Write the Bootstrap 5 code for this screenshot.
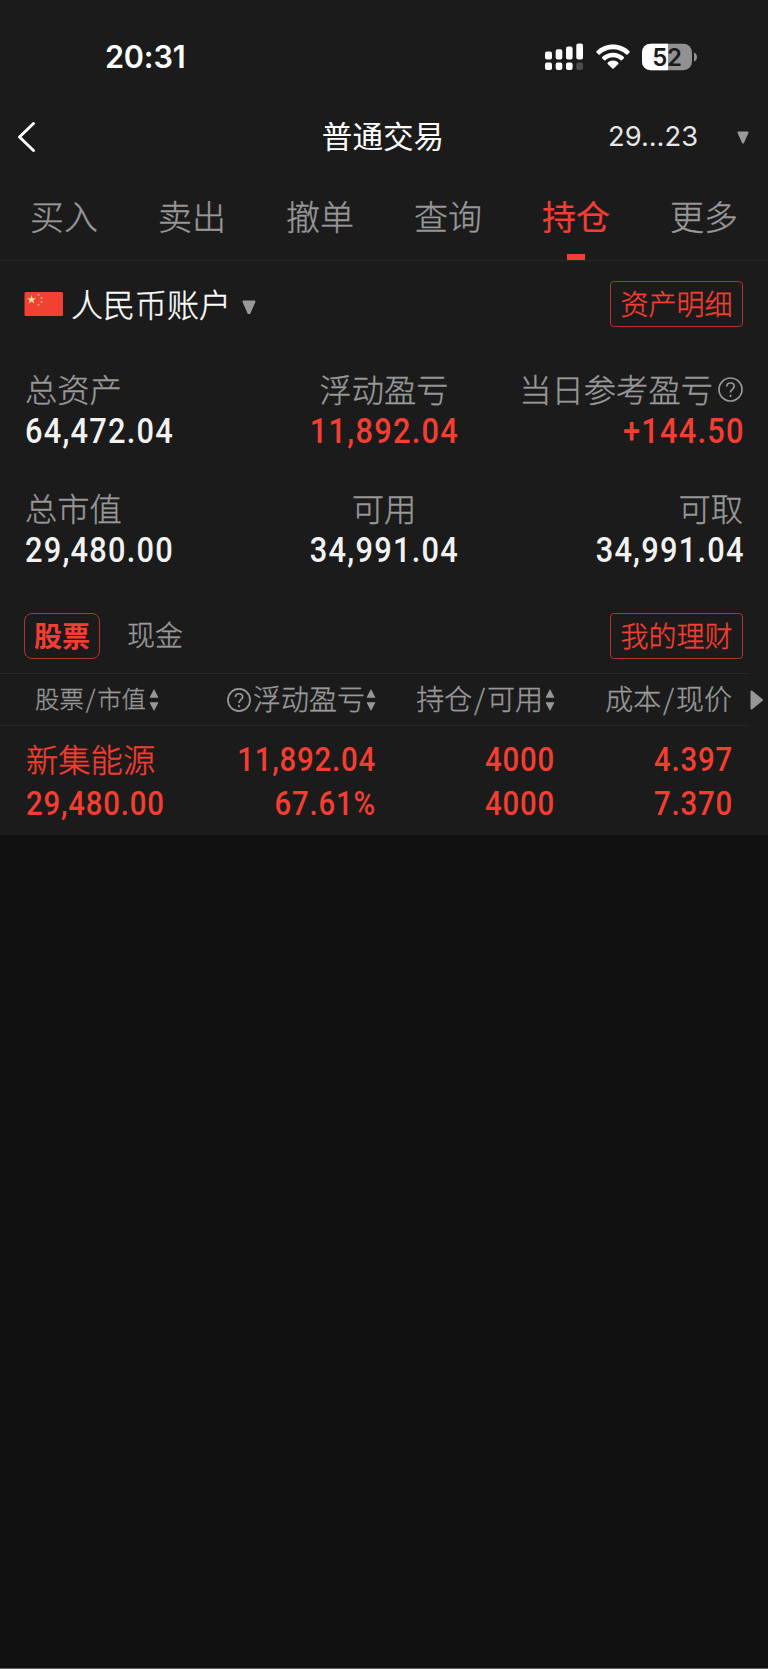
<!DOCTYPE html>
<html lang="zh-CN">
<head>
<meta charset="utf-8">
<meta name="viewport" content="width=device-width, initial-scale=1">
<title>普通交易</title>
<link href="https://cdn.jsdelivr.net/npm/bootstrap@5.3.0/dist/css/bootstrap.min.css" rel="stylesheet">
<style>
:root{--red:#f43e31;--grey:#989898;--panel:#1b1b1b}
body{background:#111;color:#fff;font-family:"Noto Sans CJK SC",sans-serif;font-weight:300;min-height:1669px;border-bottom:1px solid #666;-webkit-text-stroke:.35px}
.panel{background:var(--panel);height:835px}
.hot{color:var(--red)}
.statusbar{height:108px;padding:6px 71px 0 105px;-webkit-text-stroke:0}
.clock{font:600 30.600px/40px Inter,sans-serif;letter-spacing:-.2px}
.topbar{height:58px;padding:0 19px 0 17px;-webkit-text-stroke:0}
.page-title{font-size:30.6px;line-height:40px;font-weight:400;padding-bottom:4px}
.acct-no{font:400 27.3px/40px Inter,sans-serif;color:#e6e6e6}
.tabs-line{height:95px;border-bottom:1px solid #282828}
.tab-item{padding-top:33px;font-size:34px;line-height:34px;color:var(--grey);text-align:center}
.tab-item.on{color:var(--red);font-weight:400;-webkit-text-stroke:.2px}
.tab-item .bar{width:18px;height:6px;margin:21px auto 0;background:var(--red)}
.account{height:86px;padding:0 25px 0 24px}
.account-name{font-size:32px;line-height:40px;margin-left:8px;padding-bottom:3px}
.box{border:1px solid #b5332a;border-radius:4px;height:46px;width:133px;font-size:28px;line-height:42px;text-align:center;color:var(--red)}
.box-sm{width:76px;border-radius:8px;font-weight:700;-webkit-text-stroke:0}
.summary{padding:22px 25px 0;height:251.5px}
.summary .cellbox{height:118.5px;line-height:41px}
.cap{font-size:32.3px;line-height:38px;color:var(--grey);height:42px;white-space:nowrap}
.num{display:block;font-family:Roboto,sans-serif;font-weight:500;font-size:35px;letter-spacing:1.4px;margin-right:-1.400px;transform:scaleX(.88);color:#f2f2f2;-webkit-text-stroke:0}
.num.hot{color:var(--red)}
.num.o-start{transform-origin:left}.num.o-end{transform-origin:right}
.segment{height:74px;padding:0 25px 0 24px}
.cash{font-size:28px;line-height:42px;color:var(--grey);margin-left:27px;padding-bottom:3px}
.holdings{display:grid;grid-template-columns:200px 176px 179px 177px 1fr}
.rule{height:1px;width:750px;background:#262626}
.heads{height:51px;color:var(--grey);font-size:28px;line-height:48px}
.lbl{padding-bottom:4px}
.slash{margin:0 1.9px}
.stockrow{padding-top:12px;line-height:44px}
.stockrow .num{font-size:33.6px;letter-spacing:.9px;margin-right:-.900px;transform:scaleX(.875)}
.stockname{font-size:32.3px;line-height:41px;height:44px}
</style>
</head>
<body>
<main class="panel">
  <div class="statusbar d-flex align-items-center justify-content-between">
    <div class="clock">20:31</div>
    <div class="d-flex align-items-center">
      <svg width="39" height="28" viewBox="0 0 39 28" fill="#fff"><rect x="0" y="8.500" width="7" height="8" rx="2"/><rect x="10.700" y="6.300" width="6.600" height="10.200" rx="2"/><rect x="21" y="3.500" width="6.600" height="13" rx="2"/><rect x="31.300" y=".5" width="6.700" height="16" rx="2"/><rect x="0" y="19.500" width="7" height="7.500" rx="2"/><rect x="10.700" y="19.500" width="6.600" height="7.500" rx="2"/><rect x="21" y="19.500" width="6.600" height="7.500" rx="2"/><rect x="31.300" y="19.500" width="6.700" height="7.500" rx="2" fill="#4c4c4c"/></svg>
      <svg width="34" height="26" viewBox="0 0 34 26" style="margin:0 12px" fill="#fff"><path d="M17 0.600C23.400 .6 29.300 3.100 33.500 7.200Q34 7.900 33.500 8.500L31.500 10.500Q30.900 11 30.200 10.500C26.700 7.200 22.100 5.200 17 5.200S7.300 7.200 3.800 10.500Q3.100 11 2.500 10.500L.5 8.500Q0 7.900.5 7.200C4.700 3.100 10.600.6 17 .6Z"/><path d="M17 8.700C21.300 8.700 25 10.400 27.900 13Q28.400 13.600 27.900 14.200L25.800 16.300Q25.200 16.800 24.600 16.300C22.600 14.500 20 13.300 17 13.300S11.400 14.500 9.400 16.300Q8.800 16.800 8.200 16.300L6.100 14.200Q5.600 13.600 6.100 13C9 10.400 12.700 8.700 17 8.700Z"/><path d="M17 16.600C19.100 16.600 21 17.500 22.300 18.700Q22.800 19.300 22.300 19.900L17.600 24.500Q17 25 16.400 24.500L11.700 19.900Q11.200 19.300 11.700 18.700C13 17.500 14.900 16.600 17 16.600Z"/></svg>
      <svg width="55" height="28" viewBox="0 0 55 28"><defs><clipPath id="cell"><rect x="0" y=".7" width="50" height="26.600" rx="8.500"/></clipPath></defs><g clip-path="url(#cell)"><path fill="#919191" d="M0 0h50v28H0z"/><path fill="#fff" d="M0 0h26v28H0z"/></g><path d="M52 9.500Q55 11 55 14T52 18.500Z" fill="#919191"/><text x="25" y="22.600" text-anchor="middle" font-family="Inter,sans-serif" font-size="24" font-weight="600" letter-spacing="-.3" fill="#1b1b1b">52</text></svg>
    </div>
  </div>

  <div class="topbar row g-0 align-items-center">
    <div class="col-4"><svg class="d-block" width="20" height="32" viewBox="0 0 20 32" fill="none" stroke="#fff" stroke-width="2.900" stroke-linecap="round" stroke-linejoin="round"><path d="M16.500 2.500 2.500 16l14 13.500"/></svg></div>
    <div class="col-4 text-center page-title">普通交易</div>
    <div class="col-4 d-flex align-items-center justify-content-end"><span class="acct-no">29...23</span><svg style="margin-left:39px" width="12" height="13" viewBox="0 0 12 13"><path d="M1.500 1.500h9L6 11.500Z" fill="#999" stroke="#999" stroke-width="2" stroke-linejoin="round"/></svg></div>
  </div>

  <nav class="tabs-line row g-0">
    <div class="col tab-item">买入</div>
    <div class="col tab-item">卖出</div>
    <div class="col tab-item">撤单</div>
    <div class="col tab-item">查询</div>
    <div class="col tab-item on">持仓<div class="bar"></div></div>
    <div class="col tab-item">更多</div>
  </nav>

  <div class="account d-flex align-items-center">
    <svg width="39" height="24" viewBox="0 0 39 24"><rect x=".5" width="38.500" height="24" rx="1.500" fill="#f04132"/><path d="m7.500 3 1.100 3.200H12L9.300 8.200l1 3.300-2.800-2-2.800 2 1-3.300L3 6.200h3.400Z" fill="#fbdc9a"/><g fill="#f9b27c"><circle cx="14.500" cy="2.800" r="1"/><circle cx="17.500" cy="6" r="1"/><circle cx="17.500" cy="10" r="1"/><circle cx="14.500" cy="12.800" r="1"/></g></svg>
    <span class="account-name">人民币账户</span>
    <svg style="margin:6px 0 0 11px" width="14" height="15" viewBox="0 0 14 15"><path d="M1.500 1.500h11L7.500 13h-1Z" fill="#999" stroke="#999" stroke-width="2" stroke-linejoin="round"/></svg>
    <div class="box ms-auto">资产明细</div>
  </div>

  <section class="summary row g-0">
    <div class="col-4 cellbox"><div class="cap">总资产</div><span class="num o-start">64,472.04</span></div>
    <div class="col-4 cellbox text-center"><div class="cap">浮动盈亏</div><span class="num hot">11,892.04</span></div>
    <div class="col-4 cellbox text-end"><div class="cap d-flex justify-content-end">当日参考盈亏<svg style="margin:8px 0 0 5px" width="25" height="25" viewBox="0 0 25 25" fill="none" stroke="#989898" stroke-width="1.700"><circle cx="12.500" cy="12.500" r="11.500"/><path d="M8.800 9.500C8.800 7.200 10.300 6 12.500 6S16.200 7.300 16.200 9.300C16.200 12 12.500 12.200 12.500 15.600M12.500 17.700v2.300"/></svg></div><span class="num hot o-end">+144.50</span></div>
    <div class="col-4 cellbox"><div class="cap">总市值</div><span class="num o-start">29,480.00</span></div>
    <div class="col-4 cellbox text-center"><div class="cap">可用</div><span class="num">34,991.04</span></div>
    <div class="col-4 cellbox text-end"><div class="cap">可取</div><span class="num o-end">34,991.04</span></div>
  </section>

  <div class="segment d-flex align-items-center">
    <div class="box box-sm">股票</div>
    <div class="cash">现金</div>
    <div class="box ms-auto">我的理财</div>
  </div>

  <svg width="0" height="0" class="position-absolute"><symbol id="sort" viewBox="0 0 9 24"><path d="M4.500 1 9 9.700H0ZM0 14.300h9L4.500 23Z" fill="#989898"/></symbol></svg>
  <div class="rule"></div>
  <div class="holdings heads">
    <div class="d-flex align-items-center" style="padding-left:35px;font-size:24.400px"><span class="lbl">股票<span class="slash">/</span>市值</span><svg style="margin-left:3px" width="10" height="24"><use href="#sort"/></svg></div>
    <div class="d-flex align-items-center justify-content-end"><svg style="margin-right:2px" width="24" height="24" viewBox="0 0 25 25" fill="none" stroke="#989898" stroke-width="1.800"><circle cx="12.500" cy="12.500" r="11.500"/><path d="M8.800 9.500C8.800 7.200 10.300 6 12.500 6S16.200 7.300 16.200 9.300C16.200 12 12.500 12.200 12.500 15.600M12.500 17.700v2.300"/></svg><span class="lbl">浮动盈亏</span><svg style="margin-left:1px" width="10" height="24"><use href="#sort"/></svg></div>
    <div class="d-flex align-items-center justify-content-end"><span class="lbl">持仓<span class="slash">/</span>可用</span><svg style="margin-left:2px" width="10" height="24"><use href="#sort"/></svg></div>
    <div class="d-flex align-items-center justify-content-end"><span class="lbl">成本<span class="slash">/</span>现价</span></div>
    <div class="d-flex align-items-center" style="padding-left:18px"><svg width="14" height="22" viewBox="0 0 14 22"><path d="M1.500 2.500v17L12 11Z" fill="#989898" stroke="#989898" stroke-width="2" stroke-linejoin="round"/></svg></div>
  </div>
  <div class="rule"></div>
  <div class="holdings stockrow">
    <div style="padding-left:26px"><div class="stockname hot">新集能源</div><span class="num hot o-start">29,480.00</span></div>
    <div class="text-end" style="padding-right:1px"><span class="num hot o-end">11,892.04</span><span class="num hot o-end">67.61%</span></div>
    <div class="text-end" style="padding-right:1px"><span class="num hot o-end">4000</span><span class="num hot o-end">4000</span></div>
    <div class="text-end"><span class="num hot o-end">4.397</span><span class="num hot o-end">7.370</span></div>
  </div>
</main>
<script src="https://cdn.jsdelivr.net/npm/bootstrap@5.3.0/dist/js/bootstrap.bundle.min.js"></script>
</body>
</html>
